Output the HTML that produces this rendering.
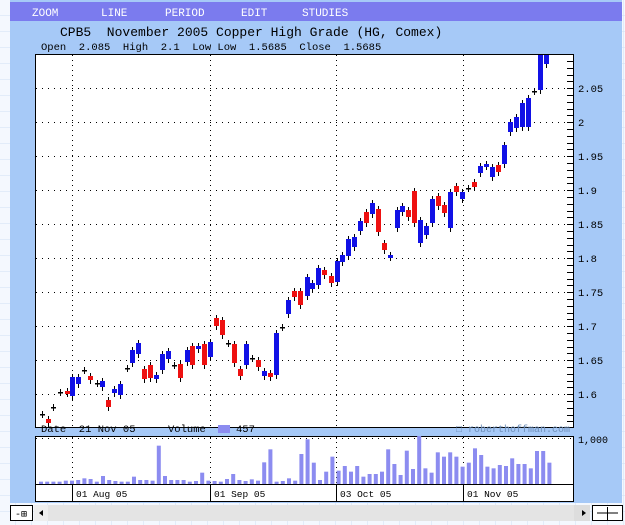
<!DOCTYPE html>
<html><head><meta charset="utf-8"><style>
body{margin:0;width:625px;height:525px;overflow:hidden;background:#eef4fc;font-family:"Liberation Mono",monospace;}
svg{position:absolute;left:0;top:0}
text{white-space:pre}
</style></head><body>
<svg id="s" width="625" height="525" xmlns="http://www.w3.org/2000/svg" font-family="Liberation Mono, monospace" xml:space="preserve">
<defs><pattern id="g" width="16" height="16" patternUnits="userSpaceOnUse"><path d="M16 0V16M0 16H16" stroke="#cfe0f4" stroke-width="1" fill="none"/></pattern></defs>
<rect width="625" height="525" fill="#f4f8fe"/>
<rect width="625" height="525" fill="url(#g)"/>
<rect x="10" y="0" width="612" height="503" fill="#a6c9f7"/>
<rect x="10" y="2" width="612" height="19" fill="#7b7bee"/>
<g fill="#fff" font-size="11"><text x="32" y="16">ZOOM</text><text x="101" y="16">LINE</text><text x="165" y="16">PERIOD</text><text x="241" y="16">EDIT</text><text x="302" y="16">STUDIES</text></g>
<text x="60" y="36" font-size="13" fill="#000">CPB5  November 2005 Copper High Grade (HG, Comex)</text>
<text x="41" y="50" font-size="10.5" fill="#000">Open  2.085  High  2.1  Low Low  1.5685  Close  1.5685</text>
<rect x="35.5" y="54.5" width="538" height="373" fill="#fff" stroke="#000"/>
<g id="grid"></g>
<g id="c"></g>
<text x="41" y="432" font-size="10.5">Date  21 Nov 05</text>
<text x="168" y="432" font-size="10.5">Volume</text>
<rect x="218" y="425" width="12" height="8" fill="#8c8cf0"/>
<text x="236" y="432" font-size="10.5">457</text>
<text x="456" y="432" font-size="10" fill="#6f8fb8">□ roberthoffman.com</text>
<rect x="35.5" y="436.5" width="538" height="48" fill="#fff" stroke="#000"/>
<g id="vg"></g>
<rect x="35.5" y="484.5" width="538" height="17" fill="#fff" stroke="#000"/>
<g stroke="#000"><line x1="72.5" y1="485" x2="72.5" y2="502"/><line x1="210.5" y1="485" x2="210.5" y2="502"/><line x1="336.5" y1="485" x2="336.5" y2="502"/><line x1="463.5" y1="485" x2="463.5" y2="502"/></g>
<g font-size="9.5"><text x="76" y="497">01 Aug 05</text><text x="214" y="497">01 Sep 05</text><text x="340" y="497">03 Oct 05</text><text x="467" y="497">01 Nov 05</text></g>
<text x="578" y="443" font-size="10">1,000</text>
<g font-size="10.5"><text x="578" y="92">2.05</text><text x="578" y="126">2</text><text x="578" y="160">1.95</text><text x="578" y="194">1.9</text><text x="578" y="228">1.85</text><text x="578" y="262">1.8</text><text x="578" y="296">1.75</text><text x="578" y="330">1.7</text><text x="578" y="364">1.65</text><text x="578" y="398">1.6</text></g>
<rect x="10.5" y="505.5" width="22" height="15" fill="#fff" stroke="#000"/>
<text x="15" y="517" font-size="10">-⊞</text>
<rect x="34" y="505" width="540" height="16" fill="#e4e4e4"/>
<rect x="34" y="505" width="14" height="16" fill="#eee"/><path d="M43 510l-4 3 4 3z" fill="#000"/>
<rect x="574" y="505" width="16" height="16" fill="#ddd"/><path d="M582 510l4 3-4 3z" fill="#000"/>
<rect x="592.5" y="505.5" width="30" height="15" fill="#fff" stroke="#000"/>
<path d="M597 513H618M607.5 507V520" stroke="#000"/>
</svg>
<script>
var ns="http://www.w3.org/2000/svg",g=document.getElementById('grid'),c=document.getElementById('c'),vg=document.getElementById('vg');
function el(p,t,a){var e=document.createElementNS(ns,t);for(var k in a)e.setAttribute(k,a[k]);p.appendChild(e);return e;}
[88,122,156,190,224,258,292,326,360,394].forEach(function(y){el(g,'line',{x1:36,x2:573,y1:y+.5,y2:y+.5,stroke:'#000','stroke-dasharray':'1 5'});});
[72,210,336,463].forEach(function(x){el(g,'line',{x1:x+.5,x2:x+.5,y1:55,y2:427,stroke:'#000','stroke-dasharray':'1 4'});});
for(var y=61;y<428;y+=6.8)el(g,'line',{x1:567,x2:573,y1:Math.round(y)+.5,y2:Math.round(y)+.5,stroke:'#000'});
var d=[[48,419,423,'r'],[42,414,414,'d'],[53,407,407,'d'],[60,392,392,'d'],[67,391,393,'r'],[72,377,396,'b'],[78,377,384,'b'],[84,370,370,'d'],[90,376,380,'r'],[97,383,383,'d'],[102,381,387,'b'],[108,400,407,'r'],[114,389,393,'b'],[120,384,395,'b'],[127,368,368,'d'],[132,350,363,'b'],[138,343,354,'b'],[144,369,379,'r'],[150,365,378,'r'],[156,375,379,'b'],[162,354,370,'b'],[168,351,359,'b'],[174,365,365,'d'],[180,364,378,'r'],[187,350,362,'b'],[192,346,365,'r'],[198,346,349,'b'],[204,344,365,'r'],[210,342,357,'b'],[216,318,326,'r'],[222,320,335,'r'],[228,343,343,'d'],[234,344,363,'r'],[240,369,376,'r'],[246,344,365,'b'],[252,358,358,'d'],[258,360,367,'r'],[264,371,376,'b'],[270,373,377,'r'],[276,333,375,'b'],[282,327,327,'d'],[288,300,314,'b'],[294,291,297,'r'],[300,291,305,'r'],[307,277,296,'b'],[312,283,289,'b'],[318,268,285,'b'],[324,270,275,'r'],[331,276,283,'r'],[337,261,282,'b'],[342,255,262,'b'],[348,239,256,'b'],[354,237,247,'b'],[360,221,231,'b'],[366,212,223,'r'],[372,203,214,'b'],[378,209,232,'r'],[384,243,250,'r'],[390,255,257,'b'],[397,210,228,'b'],[402,206,212,'b'],[408,210,217,'r'],[414,191,223,'r'],[420,220,243,'b'],[426,226,235,'b'],[432,199,223,'b'],[438,196,206,'r'],[444,205,213,'r'],[450,192,228,'b'],[456,186,192,'r'],[462,192,199,'b'],[468,188,188,'d'],[474,182,187,'r'],[480,166,173,'b'],[486,164,166,'b'],[492,167,177,'b'],[498,165,172,'r'],[504,145,164,'b'],[510,122,132,'b'],[516,117,128,'b'],[522,103,127,'b'],[528,98,127,'b'],[534,91,91,'d'],[540,55,90,'b'],[546,55,64,'b']];
d.forEach(function(k){var x=k[0],t=k[1],b=k[2],col=k[3];
el(c,'line',{x1:x+.5,x2:x+.5,y1:Math.max(55,t-3),y2:b+4,stroke:'#000'});
if(col=='d'){el(c,'rect',{x:x-2,y:t,width:5,height:1.5,fill:'#000'});}
else el(c,'rect',{x:x-2,y:t,width:5,height:Math.max(3,b-t),fill:col=='r'?'#ee1111':'#1111e6'});});
el(vg,'line',{x1:36,x2:573,y1:438.5,y2:438.5,stroke:'#000','stroke-dasharray':'1 5'});
[72,210,336,463].forEach(function(x){el(vg,'line',{x1:x+.5,x2:x+.5,y1:437,y2:484,stroke:'#000','stroke-dasharray':'1 4'});});
var v=[215,215,215,215,212,212,210,205,207,215,198,210,213,215,215,200,210,210,212,107,198,210,210,210,215,213,188,212,213,215,207,192,210,213,208,212,157,118,215,213,205,212,132,88,158,210,185,140,182,168,185,168,200,192,192,185,118,162,195,122,177,78,175,188,127,140,127,140,170,158,115,135,170,175,165,168,145,162,162,175,123,123,158];
v.forEach(function(Y,i){var top=410+Y/3;el(vg,'rect',{x:39+i*6.2,y:top,width:4,height:484-top,fill:'#8c8cf0'});});
</script>
</body></html>
